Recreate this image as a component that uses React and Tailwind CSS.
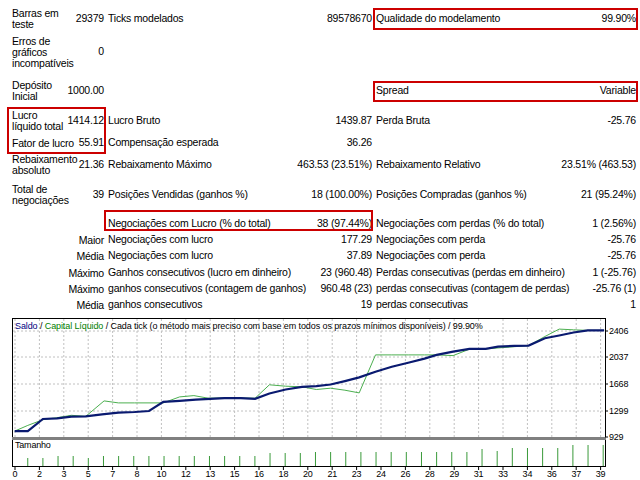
import React from "react";

const F = { fontFamily: '"Liberation Sans", Arial, sans-serif' };

function Row({ h, l1, v1, l2, v2, l3, v3, right }) {
  return (
    <div className={`flex items-center ${h}`}>
      <div className={`w-[92px] flex items-center ${right ? "justify-end" : "justify-between"}`}>
        <div className={`${right ? "text-right" : "w-[66px]"} leading-[11px]`}>{l1}</div>
        {v1 !== undefined && <div className="text-right whitespace-nowrap">{v1}</div>}
      </div>
      <div className="ml-[4px] w-[264px] flex justify-between whitespace-nowrap">
        <span>{l2}</span>
        <span>{v2}</span>
      </div>
      <div className="ml-[4px] w-[260px] flex justify-between whitespace-nowrap">
        <span>{l3}</span>
        <span>{v3}</span>
      </div>
    </div>
  );
}

const bal = [[36,352],[68,352],[105,316],[140,314],[175,309],[210,308],[250,302],[290,297],[330,295],[365,292],[400,265],[440,262],[480,258],[515,256],[550,254],[590,254],[625,256],[660,240],[700,228],[740,220],[775,218],[810,213],[845,203],[880,192],[920,175],[960,160],[1000,148],[1040,136],[1070,125],[1110,115],[1150,107],[1190,107],[1220,100],[1260,98],[1295,97],[1335,75],[1370,67],[1405,58],[1440,52],[1480,52]];
const eq = [[36,352],[68,335],[105,318],[140,312],[175,305],[210,308],[255,262],[290,268],[330,268],[365,268],[400,268],[440,250],[475,246],[510,254],[550,253],[625,254],[660,214],[700,218],[740,220],[775,228],[810,224],[845,230],[880,238],[920,125],[960,125],[1000,125],[1040,125],[1070,125],[1110,127],[1150,108],[1190,107],[1295,97],[1335,70],[1370,48],[1405,50],[1440,52],[1480,52]];
const pts = (a) => a.map(([x, y]) => `${(x / 2.45).toFixed(1)},${(y / 2.98).toFixed(1)}`).join(" ");
const barH = [8,8,10,10,8,10,10,10,10,10,10,10,10,10,10,10,13,13,13,14,14,14,14,14,14,14,14,14,14,14,17,15,18,18,18,18,21,21,21,22];
const xl = ["0","2","3","5","7","8","10","12","13","15","16","18","20","21","23","24","26","28","29","31","33","34","36","37","39"];
const yl = [["2406",18],["2037",44],["1668",71],["1299",98],["929",124]];

function Chart() {
  return (
    <svg width="640" height="170" className="block" style={F}>
      <rect x="12.5" y="5.5" width="593" height="119" fill="#fff" stroke="#000" />
      <rect x="12.5" y="126.5" width="593" height="27" fill="#fff" stroke="#000" />
      <rect x="12" y="124" width="594" height="3" fill="#808080" />
      {yl.slice(0, 4).map(([, y]) => (
        <line key={y} x1="13" x2="605" y1={y} y2={y} stroke="#c0c0c0" strokeDasharray="2 2" />
      ))}
      {xl.map((_, i) => {
        const x = 15 + i * 24.4;
        return (
          <g key={i}>
            <line x1={x} x2={x} y1="6" y2="124" stroke="#c0c0c0" strokeDasharray="2 2" />
            <line x1={x} x2={x} y1="154" y2="157" stroke="#000" />
          </g>
        );
      })}
      {barH.slice(0, 39).map((h, i) => {
        const x = (68 + i * 37.1) / 2.45;
        return <line key={i} x1={x} x2={x} y1={153} y2={153 - h} stroke="#3a9a3a" strokeWidth="1" />;
      })}
      <polyline points={pts(eq)} fill="none" stroke="#4caf50" strokeWidth="1" />
      <polyline points={pts(bal)} fill="none" stroke="#0a1a70" strokeWidth="2.2" />
      <text x="15" y="16" fontSize="9" letterSpacing="-0.1">
        <tspan fill="#000080">Saldo</tspan>
        <tspan fill="#000"> / </tspan>
        <tspan fill="#008000">Capital Líquido</tspan>
        <tspan fill="#000"> / Cada tick (o método mais preciso com base em todos os prazos mínimos disponíveis) / 99.90%</tspan>
      </text>
      <text x="15" y="135" fontSize="9" fill="#000">Tamanho</text>
      {yl.map(([t, y]) => (
        <g key={t}>
          <line x1="605" x2="608" y1={y} y2={y} stroke="#000" />
          <text x="609" y={y + 3} fontSize="9" fill="#000">{t}</text>
        </g>
      ))}
      {xl.map((t, i) => (
        <text key={i} x={15 + i * 24.4} y="164" fontSize="9" textAnchor="middle" fill="#000">{t}</text>
      ))}
    </svg>
  );
}

export default function App() {
  return (
    <div className="relative w-[640px] h-[480px] bg-white text-[10.5px] tracking-[-0.2px] text-black overflow-hidden" style={F}>
      <div className="pt-[4px] pl-[12px]">
        <Row h="h-[30px]" l1="Barras em teste" v1="29379" l2="Ticks modelados" v2="89578670" l3="Qualidade do modelamento" v3="99.90%" />
        <Row h="h-[36px]" l1="Erros de gráficos incompatíveis" v1="0" />
        <Row h="h-[42px]" l1="Depósito Inicial" v1="1000.00" l3="Spread" v3="Variable" />
        <Row h="h-[18px]" l1="Lucro líquido total" v1="1414.12" l2="Lucro Bruto" v2="1439.87" l3="Perda Bruta" v3="-25.76" />
        <Row h="h-[26px]" l1="Fator de lucro" v1="55.91" l2="Compensação esperada" v2="36.26" />
        <Row h="h-[18px]" l1="Rebaixamento absoluto" v1="21.36" l2="Rebaixamento Máximo" v2="463.53 (23.51%)" l3="Rebaixamento Relativo" v3="23.51% (463.53)" />
        <Row h="h-[41px]" l1="Total de negociações" v1="39" l2="Posições Vendidas (ganhos %)" v2="18 (100.00%)" l3="Posições Compradas (ganhos %)" v3="21 (95.24%)" />
        <Row h="h-[18px]" right l1="" l2="Negociações com Lucro (% do total)" v2="38 (97.44%)" l3="Negociações com perdas (% do total)" v3="1 (2.56%)" />
        <Row h="h-[14px]" right l1="Maior" l2="Negociações com lucro" v2="177.29" l3="Negociações com perda" v3="-25.76" />
        <Row h="h-[18px]" right l1="Média" l2="Negociações com lucro" v2="37.89" l3="Negociações com perda" v3="-25.76" />
        <Row h="h-[16px]" right l1="Máximo" l2="Ganhos consecutivos (lucro em dinheiro)" v2="23 (960.48)" l3="Perdas consecutivas (perdas em dinheiro)" v3="1 (-25.76)" />
        <Row h="h-[16px]" right l1="Máximo" l2="ganhos consecutivos (contagem de ganhos)" v2="960.48 (23)" l3="perdas consecutivas (contagem de perdas)" v3="-25.76 (1)" />
        <Row h="h-[16px]" right l1="Média" l2="ganhos consecutivos" v2="19" l3="perdas consecutivas" v3="1" />
      </div>
      <Chart />
      <div className="absolute left-[373px] top-[8px] w-[265px] h-[22px] border-2 border-[#cc0000]" />
      <div className="absolute left-[373px] top-[81px] w-[265px] h-[21px] border-2 border-[#cc0000]" />
      <div className="absolute left-[7px] top-[107px] w-[99px] h-[47px] border-2 border-[#cc0000]" />
      <div className="absolute left-[104px] top-[210px] w-[269px] h-[21px] border-2 border-[#cc0000]" />
    </div>
  );
}
